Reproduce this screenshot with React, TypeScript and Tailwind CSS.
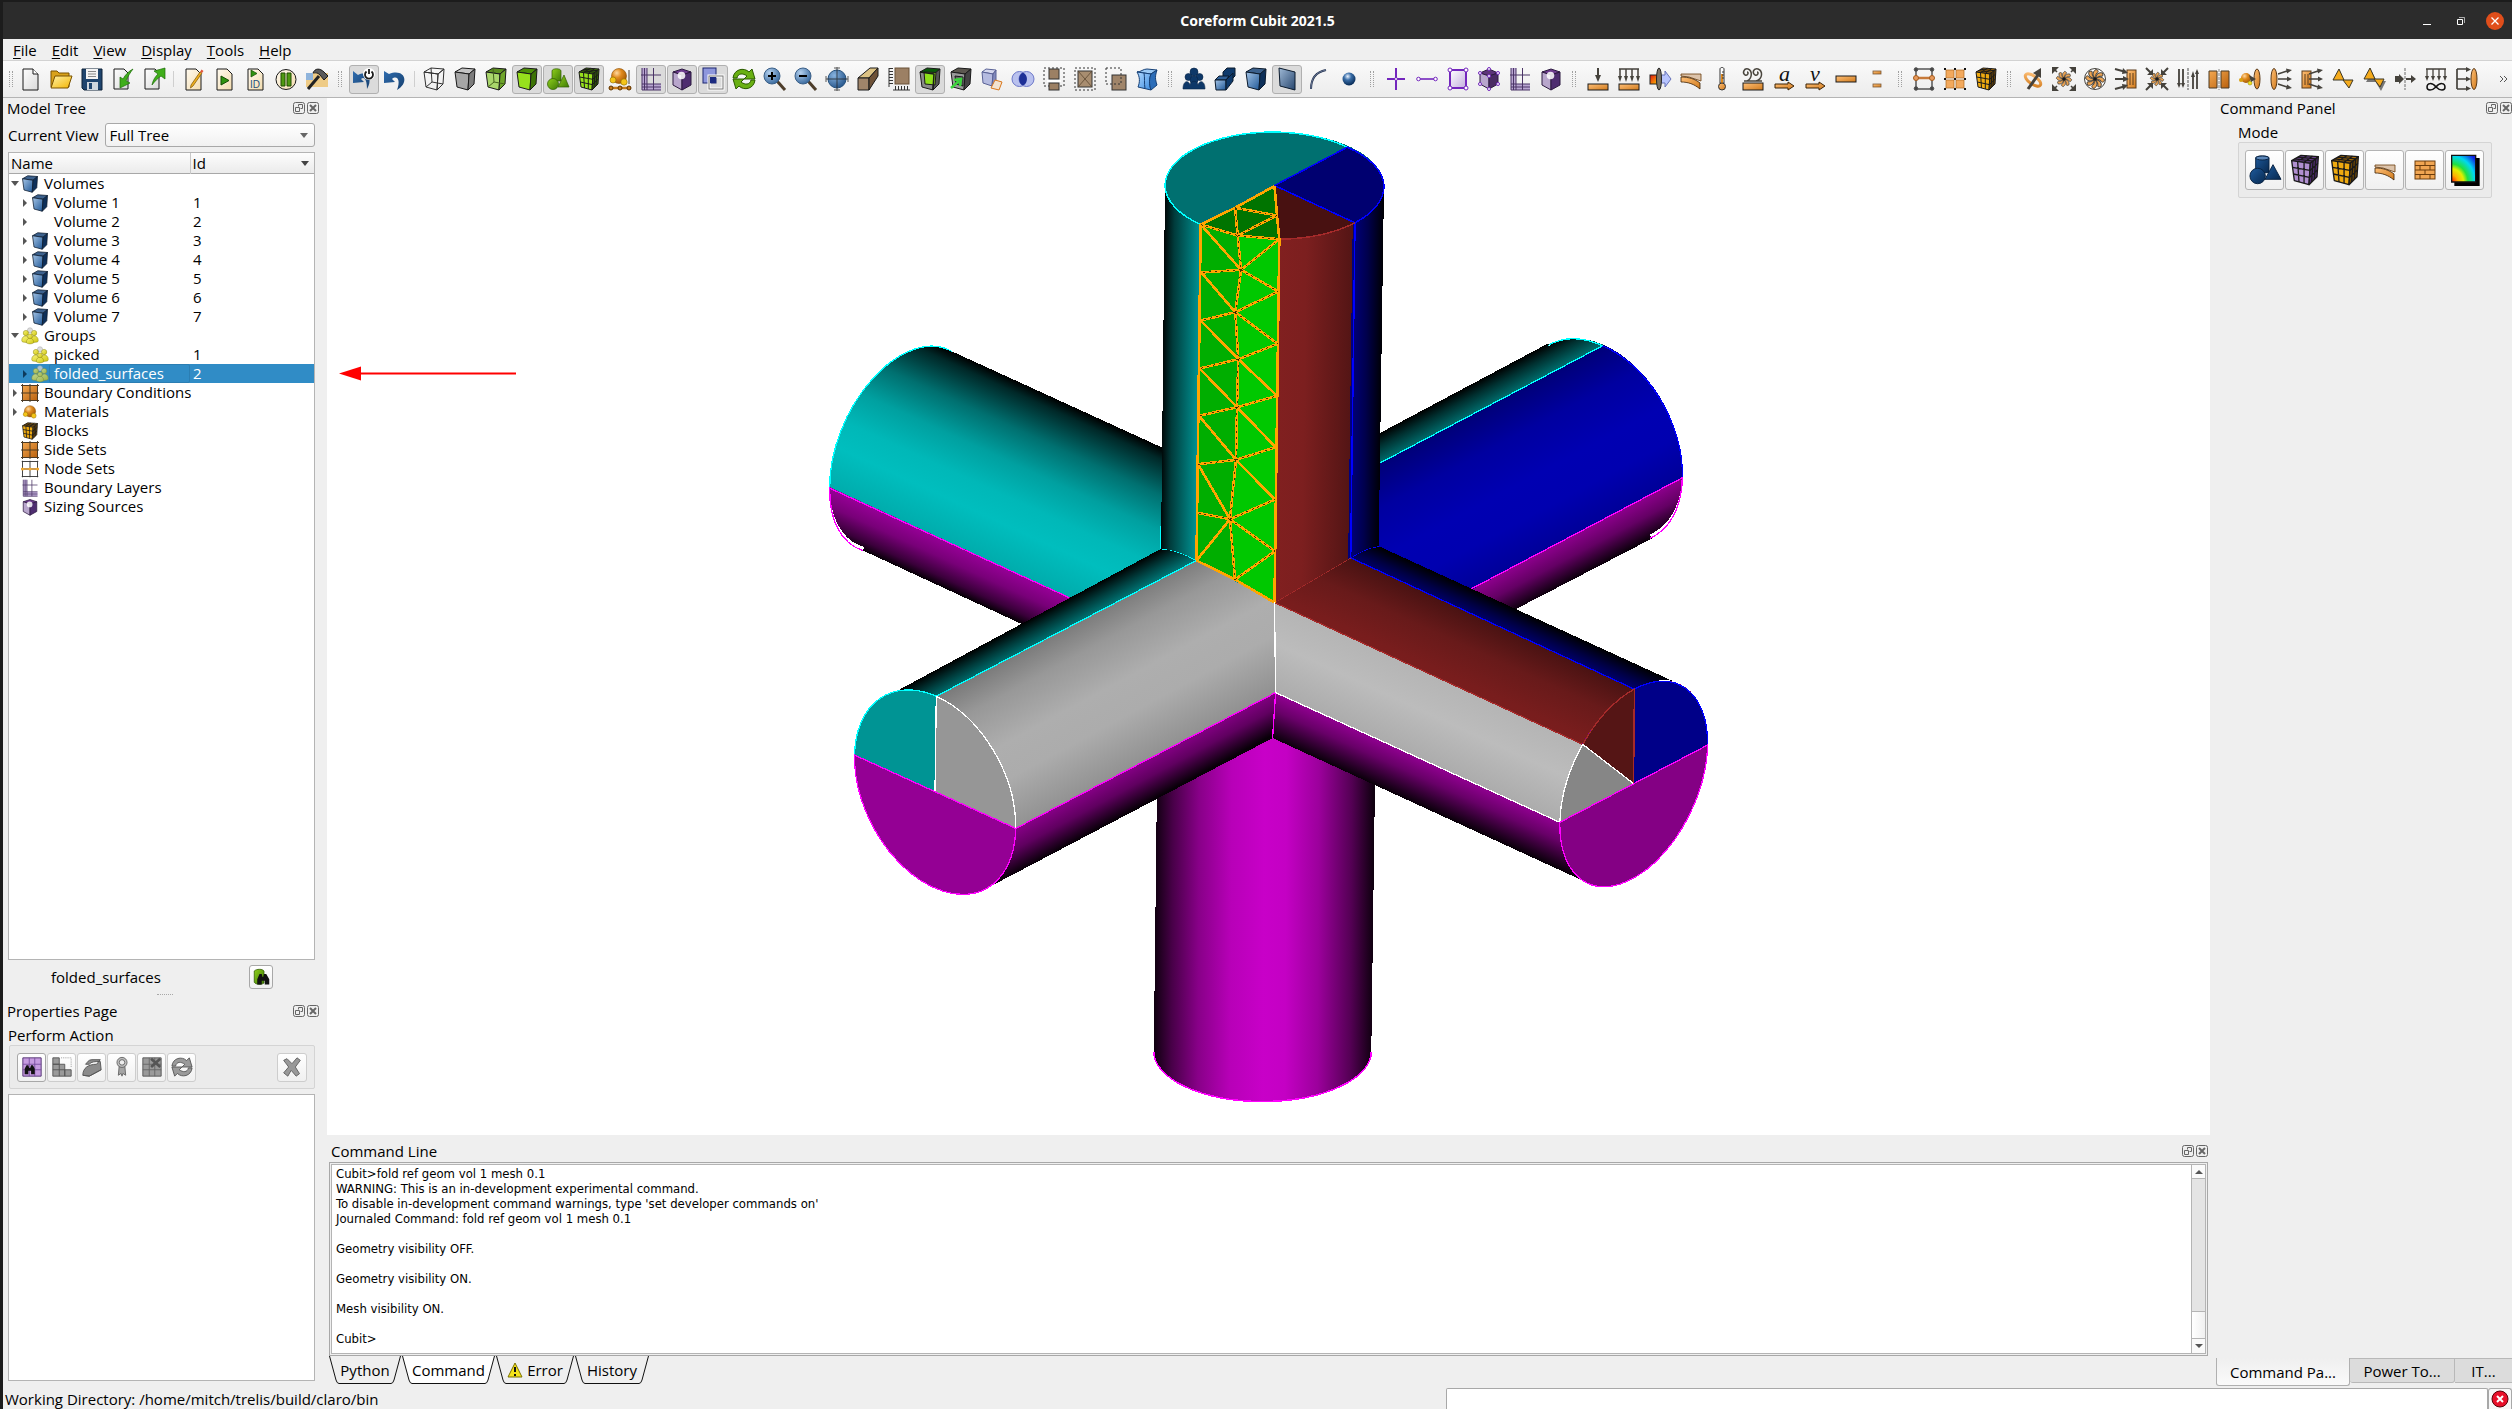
import React, { useState } from "react";
import clsx from "clsx";

type Point = [number, number];

const INK = "#1a1a1a";
const STEEL = "#45423c";

// ---------------------------------------------------------------- icons

function Cube({
  front,
  top,
  side,
  mesh,
  stroke = INK,
}: {
  front: string;
  top: string;
  side: string;
  mesh?: boolean;
  stroke?: string;
}) {
  return (
    <g stroke={stroke} strokeWidth="1" strokeLinejoin="round">
      <path d="M2 5L9 1L22 2L16 7Z" fill={top} />
      <path d="M2 5L16 7L15 23L4 20Z" fill={front} />
      <path d="M16 7L22 2L21 17L15 23Z" fill={side} />
      {mesh && (
        <path
          fill="none"
          d="M6.5 5.6L7.5 21M11.3 6.3L11.3 22M2.6 10L15.7 12.3M3.3 15L15.3 17.6M18 5.3L17 21M20 3.7L19 19M15.7 12.3L21.7 7M15.3 17.6L21.3 12M4.3 3.6L18 5.3M6.6 2.3L20 3.7M13.3 1.3L6.5 5.6M17.6 1.6L11.3 6.3"
        />
      )}
    </g>
  );
}

function Fan({ r }: { r: number }) {
  return (
    <g>
      {[0, 45, 90, 135, 180, 225, 270, 315].map((a) => (
        <path
          key={a}
          transform={`translate(12 12) rotate(${a}) scale(${r / 10})`}
          d="M0 -1C-3 -4 -2 -8 1 -9.5C4 -8.5 3.5 -7 2 -6C0.5 -5 1 -3 0 -1Z"
          fill="url(#orange)"
          stroke={STEEL}
          strokeWidth="1"
        />
      ))}
      <circle cx="12" cy="12" r="1.8" fill={INK} />
    </g>
  );
}

const BUMPS = (
  <>
    <circle cx="12" cy="5" r="4" />
    <circle cx="6.5" cy="10" r="3.5" />
    <circle cx="17.5" cy="10" r="3.5" />
    <circle cx="12" cy="13" r="4" />
    <path d="M1 22C1 13 7 13 8 18C9 13 15 13 16 18C17 13 23 13 23 22Z" />
  </>
);

const CURL_ARROWS = (
  <>
    <path d="M1 11C2 2 12 0 17 5L20 2L23 12L12 12L15 9C11 6 6 6 5 11Z" />
    <path d="M23 13C22 22 12 24 7 19L4 22L1 12L12 12L9 15C13 18 18 18 19 13Z" />
  </>
);

const GRID_AXES = (
  <g stroke="#4b3566" fill="none">
    <path d="M3 1V23H22V17H8V1Z" fill="#b9a6d2" stroke="none" />
    <path d="M3 1V23M5.5 1V23M8 1V23M14.5 1V23M3 23H22M3 20H22M3 17H22M2 8H22" />
  </g>
);

const SIZING = (
  <g stroke="#2d1a40" strokeLinejoin="round">
    <path d="M3 5L12 2L21 5L12 8Z" fill="#6b3a8c" />
    <path d="M3 5L12 8V23L3 18Z" fill="#b8a6cc" />
    <path d="M21 5L12 8V23L21 18Z" fill="#4e2d70" />
    <circle cx="11.5" cy="8.5" r="3.8" fill="#fff" stroke="none" opacity=".85" />
  </g>
);

const MATERIAL = (
  <>
    <circle cx="11" cy="9" r="7.5" fill="url(#ball)" stroke="#8a4b00" strokeWidth=".6" />
    <circle cx="5" cy="13" r="3" fill="#f5c518" stroke="#8a6a00" strokeWidth=".6" />
    <circle cx="16" cy="15" r="3.2" fill="#f5c518" stroke="#8a6a00" strokeWidth=".6" />
  </>
);

const GROUP = (
  <g stroke="#8f8a10" strokeWidth=".7" fill="url(#yellow)">
    <circle cx="12" cy="4.5" r="3.5" fill="#dcdcdc" stroke="#aaa" />
    <circle cx="6.5" cy="8" r="3.5" />
    <circle cx="17.5" cy="8" r="3.5" />
    <path d="M1 18C1 10 11 10 11 18L11 21L2 20ZM13 18C13 10 23 10 23 18L22 20L13 21Z" />
    <path d="M7 21C7 13 17 13 17 21C14 23 10 23 7 21Z" />
    <circle cx="12" cy="12.5" r="3.2" />
  </g>
);

const SIDESETS = (
  <g stroke="#4b3a24">
    <path d="M2 2H22V22H2Z" fill="url(#orangeDeep)" />
    <path d="M12 0V24M0 12H24M2 0V24M22 0V24M0 2H24M0 22H24" strokeWidth="1.3" />
  </g>
);

const TRIPLE_RIGHT = (
  <g stroke={STEEL} strokeWidth="1.5" fill={STEEL}>
    <path d="M9 7L18 4M9 12H18M9 17L18 20" />
    <path d="M17 1.5L23 3L18 6.5ZM18 9.5L23 12L18 14.5ZM18 17.5L23 21L17 22.5Z" stroke="none" />
  </g>
);

const PAGE = "M5 2H15L20 7V23H5Z";

const DIAG_OUT = (
  <g stroke={STEEL} strokeWidth="1.6" fill={STEEL}>
    <path d="M5 5L1 1M19 5L23 1M5 19L1 23M19 19L23 23" />
    <path d="M0 0H7L0 7ZM24 0H17L24 7ZM0 24H7L0 17ZM24 24H17L24 17Z" stroke="none" />
  </g>
);

const DIAG_IN = (
  <g stroke={STEEL} strokeWidth="2" fill={STEEL}>
    <path d="M1 1L6 6M23 1L18 6M1 23L6 18M23 23L18 18" />
    <path d="M8 8V2L2 8ZM16 8V2L22 8ZM8 16V22L2 16ZM16 16V22L22 16Z" stroke="none" />
  </g>
);

const ICONS: Record<string, React.ReactNode> = {
  new: (
    <g stroke={INK} fill="url(#paper)">
      <path d={PAGE} />
      <path d="M15 2V7H20" fill="#fff" />
    </g>
  ),
  open: (
    <g stroke="#7a5200" strokeLinejoin="round">
      <path d="M2 20V4H8L10 6H20V20Z" fill="#d9a21b" />
      <path d="M2 21L6 9H23L19 21Z" fill="url(#folder)" />
    </g>
  ),
  save: (
    <g>
      <path d="M2 2H22V23H4L2 21Z" fill="#20456e" stroke="#0f2338" />
      <rect x="6" y="2" width="12" height="10" fill="#f4f4f4" />
      <path d="M8 4.5H16M8 7H16M8 9.5H16" stroke="#888" />
      <rect x="7" y="15" width="11" height="8" fill="#cfd6dd" />
      <rect x="9" y="16" width="3" height="6" fill="#20456e" />
    </g>
  ),
  importFile: (
    <g>
      <path d="M3 2H13L17 6V22H3Z" fill="url(#paper)" stroke={INK} />
      <path d="M22 2C19 6 17 9 15 14L19 16L9 21L9 10L12 12C14 8 18 4 22 2Z" fill="#3fae1a" stroke="#1d6b08" strokeWidth=".7" />
    </g>
  ),
  exportFile: (
    <g>
      <path d="M3 2H13L17 6V22H3Z" fill="url(#paper)" stroke={INK} />
      <path d="M10 18C11 13 13 10 16 7L12 4L23 1L23 12L19 9C16 11 13 14 10 18Z" fill="#3fae1a" stroke="#1d6b08" strokeWidth=".7" />
    </g>
  ),
  journal: (
    <g>
      <path d={PAGE} fill="url(#cream)" stroke={INK} />
      <path d="M10 18L19 5L21 6L12 19L9.5 21Z" fill="#f0b020" stroke="#7a5200" strokeWidth=".7" />
      <path d="M19 5L20.5 2.5L22.5 4L21 6Z" fill="#e2583e" />
    </g>
  ),
  play: (
    <g>
      <path d={PAGE} fill="url(#cream)" stroke={INK} />
      <path d="M9 9L17 13.5L9 18Z" fill="#2f9410" stroke="#124a02" />
    </g>
  ),
  playId: (
    <g>
      <path d={PAGE} fill="url(#cream)" stroke={INK} />
      <path d="M8 3L14 6.5L8 10Z" fill="#2f9410" stroke="#124a02" strokeWidth=".7" />
      <text x="7" y="20.5" fontSize="10" fill="#24507c" fontFamily="Liberation Sans">
        ID
      </text>
    </g>
  ),
  pause: (
    <g>
      <circle cx="12" cy="12.5" r="10" fill="url(#cream)" stroke={INK} />
      <path d="M7 6H11V19H7ZM13 6H17V19H13Z" fill="#4f9a10" stroke="#1e4a02" />
    </g>
  ),
  hammer: (
    <g>
      <path d="M1 6H23V20H1Z" fill="#eecb86" />
      <path d="M1 6H8V13H1Z" fill="#8fb4dc" />
      <path d="M3 22L14 9" stroke="#222" strokeWidth="3" />
      <path d="M8 6C10 1 15 1 19 5L23 9L19 13L15 8C12 5 10 6 8 6Z" fill="#5a5a5a" stroke={INK} />
    </g>
  ),
  undoPower: (
    <g>
      <path d="M1 4L1 16L12 15L9 12C12 9 15 12 15 22C21 12 16 3 6 8Z" fill="url(#blueArrow)" />
      <circle cx="17" cy="7" r="6" fill="#fff" />
      <path d="M14.5 4.5A4 4 0 1 0 19.5 4.5M17 2V7" stroke={INK} strokeWidth="1.8" fill="none" />
    </g>
  ),
  undo: <path d="M1 4L1 16L12 15L9 12C14 8 18 13 14 23C27 16 22 1 6 7Z" fill="url(#blueArrow)" />,
  wire: (
    <g>
      <Cube front="none" top="none" side="none" stroke="#333" />
      <path d="M9 1L10 15L4 20M10 15L21 17" stroke="#333" fill="none" />
    </g>
  ),
  cubeGray: <Cube front="#a6a6a6" top="#c4c4c4" side="#7d7d7d" />,
  cubeGlass: (
    <g>
      <Cube front="#a9d66b" top="#5d8f22" side="#6fa52b" />
      <path d="M9 1L10 15L4 20M10 15L21 17" stroke="#44631c" fill="none" />
    </g>
  ),
  cubeGreen: <Cube front="#97e01c" top="#4d8f08" side="#3c7305" />,
  shapesGreen: (
    <g stroke="#2e5a00" strokeWidth=".7" fill="url(#green)">
      <path d="M6 4C6 1 15 1 15 4V14H6Z" />
      <path d="M12 20L18 8L23 20Z" />
      <circle cx="7" cy="17" r="5.5" />
    </g>
  ),
  meshGreen: <Cube front="#97e01c" top="#3c7305" side="#346204" mesh />,
  materialBar: (
    <g>
      {MATERIAL}
      <path d="M21 3V17" stroke={STEEL} />
      <path d="M1 21H23" stroke="#c77a1a" strokeWidth="2.5" />
      <circle cx="3" cy="21" r="2" fill="#c77a1a" stroke="#5a3200" />
      <circle cx="12" cy="21" r="2" fill="#c77a1a" stroke="#5a3200" />
      <circle cx="21" cy="21" r="2" fill="#c77a1a" stroke="#5a3200" />
    </g>
  ),
  gridAxes: GRID_AXES,
  sizing: SIZING,
  overlap: (
    <g>
      <rect x="2" y="1" width="13" height="15" fill="#8e97dc" stroke="#1d2670" />
      <rect x="8" y="9" width="14" height="13" fill="none" stroke="#fff" strokeWidth="3" />
      <rect x="8" y="9" width="14" height="13" fill="none" stroke="#777" />
      <rect x="9" y="10" width="6" height="6" fill="#1b2a80" />
    </g>
  ),
  refresh: <g fill="#69b012" stroke="#2b5a00">{CURL_ARROWS}</g>,
  zoomIn: (
    <g>
      <path d="M14 14L22 23" stroke="#4d3d2a" strokeWidth="3" />
      <circle cx="9" cy="9" r="8" fill="url(#lens)" stroke="#3a5f88" />
      <path d="M5 9H13M9 5V13" stroke="#000" strokeWidth="2" />
    </g>
  ),
  zoomOut: (
    <g>
      <path d="M14 14L22 23" stroke="#4d3d2a" strokeWidth="3" />
      <circle cx="9" cy="9" r="8" fill="url(#lens)" stroke="#3a5f88" />
      <path d="M5 9H13" stroke="#000" strokeWidth="2" />
    </g>
  ),
  zoomFit: (
    <g>
      <circle cx="12" cy="12" r="9" fill="url(#lensDeep)" stroke="#24507c" />
      <path d="M12 0V24M1 12H23M9 1H15M9 23H15M1 9V15M23 9V15" stroke="#222" opacity=".75" />
    </g>
  ),
  perspective: (
    <g stroke={INK} strokeLinejoin="round">
      <path d="M2 11L14 1L22 1L13 11Z" fill="#dcc284" />
      <path d="M2 11H13V23H2Z" fill="#a0856a" />
      <path d="M13 11L22 1V9L13 23Z" fill="#6e5238" />
    </g>
  ),
  ruler: (
    <g>
      <rect x="8" y="1" width="14" height="16" fill="#9c8064" stroke="#6a5238" />
      <path d="M4 1V18M8 21H23" stroke="#333" strokeWidth="4" strokeDasharray="1 2" />
      <path d="M2 1V20M6 23H23" stroke="#333" />
    </g>
  ),
  frameGreen: (
    <g stroke={INK} strokeLinejoin="round">
      <path d="M2 5L9 1L22 2L16 7Z" fill="#0b5a0b" />
      <path d="M2 5L16 7L15 23L4 20Z" fill="#8a8a8a" />
      <path d="M16 7L22 2L21 17L15 23Z" fill="#555" />
      <path d="M6 5L18 5.5L17 18L7 17Z" fill="#8ee01a" />
      <path d="M2 5L16 7L15 23" fill="none" strokeWidth="1.5" />
    </g>
  ),
  frameArrow: (
    <g>
      <Cube front="#999" top="#5c5850" side="#444" />
      <path d="M6 9L14 10V19L7 17Z" fill="#666" stroke={INK} />
      <path d="M2 21L10 14M5 13L12 12L11 19" stroke="#3bd43b" strokeWidth="2.5" fill="none" />
    </g>
  ),
  cubeTag: (
    <g strokeLinejoin="round">
      <path d="M2 5L6 2L16 3L13 7Z" fill="#d5d8ee" stroke="#5a6296" />
      <path d="M2 5L13 7L12 19L3 16Z" fill="#b5bbe0" stroke="#5a6296" />
      <path d="M13 7L16 3V13L12 19Z" fill="#8189bd" stroke="#5a6296" />
      <path d="M15 13L22 15L19 23L11 21Z" fill="#f3e3d0" stroke="#d9771c" />
    </g>
  ),
  intersect: (
    <g>
      <circle cx="8.5" cy="12" r="7.5" fill="#b9c1ee" stroke="#6c77c8" />
      <circle cx="15.5" cy="12" r="7.5" fill="#b9c1ee" stroke="#6c77c8" />
      <path d="M12 5.4A7.5 7.5 0 0 1 12 18.6A7.5 7.5 0 0 1 12 5.4Z" fill="#1d2f96" />
    </g>
  ),
  splitA: (
    <g>
      <path d="M2 1H22V19H2Z" fill="none" stroke="#333" strokeDasharray="2 2" />
      <rect x="7" y="2" width="10" height="10" fill="#9c8064" stroke="#333" />
      <rect x="7" y="16" width="10" height="7" fill="#9c8064" stroke="#333" />
      <path d="M5 14H19" stroke="#fff" strokeWidth="2" />
    </g>
  ),
  splitB: (
    <g>
      <path d="M2 1H22V23H2Z" fill="none" stroke="#333" strokeDasharray="2 2" />
      <rect x="5" y="4" width="14" height="16" fill="#a88d70" stroke="#333" />
      <path d="M5 4L19 20M19 4L5 20" stroke="#5a4630" strokeWidth=".8" />
    </g>
  ),
  splitC: (
    <g>
      <rect x="8" y="8" width="14" height="15" fill="#a0856a" stroke="#333" />
      <path d="M2 1H17V17H2Z" fill="none" stroke="#333" strokeDasharray="2 2" />
    </g>
  ),
  cubeWarp: (
    <g stroke="#153f75" strokeLinejoin="round">
      <path d="M2 5C6 5 8 2 12 2L22 3C20 5 18 5 16 7Z" fill="#9ccaf5" />
      <path d="M2 5L16 7C14 12 14 17 16 23L3 20C5 15 5 10 2 5Z" fill="url(#sky)" />
      <path d="M16 7L22 3C20 9 20 12 22 18L16 23C14 17 14 12 16 7Z" fill="#2c6db8" />
      <path d="M9 6C10 11 9 16 10 21.5" fill="none" />
    </g>
  ),
  groupNavy: (
    <g fill="#0e3868" stroke="#082548" strokeWidth=".6">
      {BUMPS}
    </g>
  ),
  bodyNavy: (
    <g stroke="#0b1a2c" strokeLinejoin="round">
      <path d="M10 5L14 1H22V9L18 13H10Z" fill="#0f3a6b" />
      <path d="M2 13L6 9H16L13 13Z" fill="#2f5f96" />
      <path d="M2 13H13V23H3Z" fill="url(#navy)" />
      <path d="M13 13L20 6V14L13 23Z" fill="#0f3a6b" />
    </g>
  ),
  volume: <Cube front="url(#navy)" top="#3c618d" side="#0d2f59" stroke="#0b1a2c" />,
  surface: <path d="M4 1L20 5V23L5 19Z" fill="url(#navyFace)" stroke="#0b1a2c" />,
  curve: (
    <g>
      <path d="M5 22C5 11 10 5 20 3" fill="none" stroke="#1d2c4a" strokeWidth="2" />
      <path d="M5 22C5 11 10 5 20 3" fill="none" stroke="#9aa7c4" strokeWidth=".6" />
    </g>
  ),
  vertex: <circle cx="12" cy="12" r="6.5" fill="url(#ballNavy)" />,
  meshNode: (
    <g stroke="#7326bd" strokeWidth="2" fill="#fff">
      <path d="M12 1V23M3 12H21" />
      <circle cx="12" cy="12" r="1.5" strokeWidth="1" />
    </g>
  ),
  meshEdge: (
    <g stroke="#7326bd" strokeWidth="1.6" fill="#fff">
      <path d="M4 12H20" />
      <circle cx="3.5" cy="12" r="1.8" strokeWidth="1" />
      <circle cx="20.5" cy="12" r="1.8" strokeWidth="1" />
    </g>
  ),
  meshFace: (
    <g stroke="#7326bd" fill="#fff">
      <rect x="4" y="3" width="16" height="18" fill="url(#lilac)" strokeWidth="2" />
      <circle cx="4" cy="3" r="2" />
      <circle cx="20" cy="3" r="2" />
      <circle cx="4" cy="21" r="2" />
      <circle cx="20" cy="21" r="2" />
    </g>
  ),
  meshHex: (
    <g>
      <path d="M3 6L12 2L21 6L12 9Z" fill="#5c3478" stroke="#2d1a40" />
      <path d="M3 6L12 9V22L3 17Z" fill="#b8a6cc" stroke="#2d1a40" />
      <path d="M21 6L12 9V22L21 17Z" fill="#4a2b63" stroke="#2d1a40" />
      <g fill="#fff" stroke="#7326bd">
        <circle cx="3" cy="6" r="1.5" />
        <circle cx="12" cy="2" r="1.5" />
        <circle cx="21" cy="6" r="1.5" />
        <circle cx="12" cy="9" r="1.5" />
        <circle cx="3" cy="17" r="1.5" />
        <circle cx="21" cy="17" r="1.5" />
        <circle cx="12" cy="22" r="1.5" />
      </g>
    </g>
  ),
  force: (
    <g>
      <rect x="2" y="17" width="20" height="6" fill="url(#orange)" stroke={INK} />
      <path d="M12 1V10" stroke={STEEL} strokeWidth="2" />
      <path d="M9 8H15L12 15Z" fill={STEEL} />
    </g>
  ),
  pressure: (
    <g>
      <rect x="2" y="17" width="20" height="6" fill="url(#orange)" stroke={INK} />
      <path d="M2 2H22M3 2V11M9 2V11M15 2V11M21 2V11" stroke={STEEL} strokeWidth="1.5" />
      <path d="M1 9H5L3 15ZM7 9H11L9 15ZM13 9H17L15 15ZM19 9H23L21 15Z" fill={STEEL} />
    </g>
  ),
  heatFlux: (
    <g stroke="#222">
      <rect x="2" y="8" width="9" height="9" fill="url(#hot)" />
      <path d="M12 8H17V4L23 12L17 20V16H12Z" fill="#b7c4ff" stroke="#6672b8" />
      <ellipse cx="11" cy="12" rx="2.5" ry="11" fill="#7a7468" />
    </g>
  ),
  bend: (
    <g stroke="#6b3c0c" strokeWidth=".8">
      <path d="M2 7H22V14L10 10L2 9Z" fill="#dcc3aa" />
      <path d="M2 10C10 10 16 12 21 16V22C15 17 9 15 2 15Z" fill="url(#orange)" stroke="#3b2206" />
    </g>
  ),
  temperature: (
    <g stroke="#333">
      <path d="M10 2C10 0 14 0 14 2V16H10Z" fill="#fff" />
      <path d="M11 7H13V17H11Z" fill="#e08a1e" stroke="none" />
      <circle cx="12" cy="19.5" r="3.5" fill="url(#orange)" />
      <path d="M12 5H14M12 8H14M12 11H14" />
    </g>
  ),
  convection: (
    <g>
      <rect x="2" y="16" width="20" height="7" fill="url(#orange)" stroke={INK} />
      <path
        d="M6 14C11 12 12 4 7 2C3 1 1 6 4 8C7 9 8 5 6 5M15 14C22 12 22 4 17 2C12 1 11 6 14 8C17 9 18 5 16 5M3 14H21"
        stroke="#4a463e"
        strokeWidth="1.5"
        fill="none"
      />
    </g>
  ),
  accel: (
    <g>
      <text x="7" y="14" fontSize="22" fontStyle="italic" fontFamily="Liberation Serif" fill="#111">
        a
      </text>
      <path d="M3 17H16V15L22 19L16 23V21H3Z" fill="url(#orange)" stroke="#3b2206" />
    </g>
  ),
  velocity: (
    <g>
      <text x="7" y="14" fontSize="22" fontStyle="italic" fontFamily="Liberation Serif" fill="#111">
        v
      </text>
      <path d="M3 17H16V15L22 19L16 23V21H3Z" fill="url(#orange)" stroke="#3b2206" />
    </g>
  ),
  bar: <rect x="2" y="9" width="20" height="6" fill="url(#orange)" stroke={INK} />,
  contact: (
    <g fill="url(#orange)" stroke="#7a5a3a" strokeWidth=".8">
      <rect x="8" y="4" width="8" height="3" />
      <rect x="8" y="17" width="8" height="3" />
    </g>
  ),
  nodeset: (
    <g stroke="#555" strokeWidth="1.5">
      <path d="M4 2H20M4 22H20M4 2V22M20 2V22" fill="none" />
      <path d="M4 11H20" stroke="#c77a3a" strokeWidth="2.5" />
      <g fill="#444" strokeWidth="1">
        <circle cx="4" cy="2.5" r="1.8" />
        <circle cx="20" cy="2.5" r="1.8" />
        <circle cx="4" cy="21.5" r="1.8" />
        <circle cx="20" cy="21.5" r="1.8" />
      </g>
      <circle cx="4" cy="11" r="2.5" fill="#e79a5c" stroke="#a45a1c" strokeWidth="1" />
      <circle cx="20" cy="11" r="2.5" fill="#e79a5c" stroke="#a45a1c" strokeWidth="1" />
    </g>
  ),
  sideset: (
    <g>
      <path d="M3 3H11V11H3ZM13 3H21V11H13ZM3 13H11V21H3ZM13 13H21V21H13Z" fill="#f3a95c" stroke="#b06a20" strokeWidth=".7" />
      <path d="M1 2H3M11 2H13M21 2H23M1 12H3M11 12H13M21 12H23M1 22H3M11 22H13M21 22H23" stroke="#111" strokeWidth="2" />
    </g>
  ),
  block: <Cube front="#efaa10" top="#a86c06" side="#6e4804" mesh />,
  swirlArrow: (
    <g>
      <ellipse cx="12" cy="13" rx="9" ry="4" transform="rotate(35 12 13)" fill="none" stroke="url(#orange)" strokeWidth="3" />
      <path d="M7 22L17 8" stroke={STEEL} strokeWidth="3" />
      <path d="M20 1L20 11L12 6Z" fill={STEEL} />
    </g>
  ),
  fanOut: (
    <g>
      {DIAG_OUT}
      <Fan r={8} />
    </g>
  ),
  fan: (
    <g>
      <circle cx="12" cy="12" r="10.5" fill="#fff" stroke={STEEL} />
      <Fan r={10} />
    </g>
  ),
  inflow: (
    <g>
      <rect x="13" y="3" width="9" height="18" fill="url(#orange)" stroke="#5a3a1a" />
      <path d="M16 6V18M19 6V18" stroke="#5a3a1a" />
      <path d="M1 2L12 5M1 12H12M1 22L12 19" stroke={STEEL} strokeWidth="2" />
      <path d="M9 1L14 6L8 7ZM9 9L15 12L9 15ZM8 17L14 18L9 23Z" fill={STEEL} />
    </g>
  ),
  fanIn: (
    <g>
      <Fan r={7} />
      {DIAG_IN}
    </g>
  ),
  shear: (
    <g stroke={STEEL} strokeWidth="1.8" fill={STEEL}>
      <path d="M3 2V18M7 2V18M17 7V22M21 4V22" />
      <path d="M1 16H5L3 21ZM5 16H9L7 21ZM15 10H19L17 4ZM19 7H23L21 2Z" stroke="none" />
      <path d="M12 1V23" stroke="#999" strokeDasharray="3 1" />
    </g>
  ),
  symmetry: (
    <g>
      <path d="M2 4H10V21H2ZM14 4H22V21H14Z" fill="url(#orangeDeep)" stroke="#4b3a24" />
      <path d="M12 2V23" stroke="#888" strokeDasharray="3 1" />
    </g>
  ),
  opening: (
    <g>
      <ellipse cx="19" cy="12" rx="3" ry="10" fill="url(#orange)" stroke="#5a3a1a" />
      <circle cx="8" cy="11" r="5" fill="url(#ball)" />
      <circle cx="12" cy="16" r="2" fill="#f0e020" stroke="#888000" strokeWidth=".5" />
      <circle cx="3" cy="13" r="2" fill="#d8a010" />
      <path d="M11 8L18 12L13 15Z" fill={STEEL} />
    </g>
  ),
  outlet: (
    <g>
      <ellipse cx="5" cy="12" rx="3" ry="10.5" fill="url(#orange)" stroke="#5a3a1a" />
      {TRIPLE_RIGHT}
    </g>
  ),
  outflow: (
    <g>
      <rect x="2" y="4" width="9" height="17" fill="url(#orange)" stroke="#5a3a1a" />
      <path d="M5 7V18M8 7V18" stroke="#5a3a1a" />
      {TRIPLE_RIGHT}
    </g>
  ),
  triA: <path d="M2 13L8 2L13 13ZM12 13H22L18 21Z" fill="#f5ab1c" stroke="#3b3626" />,
  triB: (
    <g>
      <path d="M4 15L10 5L15 15ZM13 14H24L19 24Z" fill="#777" />
      <path d="M2 12L8 1L13 12ZM12 12H22L18 20Z" fill="#f5ab1c" stroke="#3b3626" />
    </g>
  ),
  through: (
    <g fill={STEEL}>
      <path d="M2 9H6V7L11 12L6 17V15H2Z" />
      <path d="M12 1V23" stroke="#999" strokeWidth="1.5" strokeDasharray="3 1" />
      <path d="M13 11H18V8L23 12L18 16V13H13Z" />
    </g>
  ),
  farField: (
    <g>
      <path d="M2 2H22M3 2V11M9 2V11M15 2V11M21 2V11" stroke={STEEL} strokeWidth="1.3" />
      <path d="M1 9H5L3 14ZM7 9H11L9 14ZM13 9H17L15 14ZM19 9H23L21 14Z" fill={STEEL} />
      <path d="M12 20C8 15 3 16 3 20C3 24 8 24 12 20C16 15 21 16 21 20C21 24 16 24 12 20Z" fill="none" stroke="#111" strokeWidth="1.5" />
    </g>
  ),
  inlet: (
    <g>
      <ellipse cx="19" cy="12" rx="3" ry="10.5" fill="url(#orange)" stroke="#5a3a1a" />
      <path d="M2 2V22M2 2H12M2 12H12M2 22H12" stroke={STEEL} strokeWidth="1.7" fill="none" />
      <path d="M11 0L16 2.5L11 5ZM11 9.5L16 12L11 14.5ZM11 19L16 21.5L11 24Z" fill={STEEL} />
    </g>
  ),
  group: GROUP,
  sidesetTree: SIDESETS,
  material: <g transform="translate(1 2)">{MATERIAL}</g>,
  nodesetTree: (
    <g stroke="#333" strokeWidth="1.2">
      <path d="M2 1V23M12 1V23M22 1V23M1 2H23M1 22H23" />
      <path d="M0 12H24" stroke="#c07a10" strokeWidth="2" />
      <circle cx="2" cy="12" r="2" fill="#f0a830" stroke="none" />
      <circle cx="12" cy="12" r="2" fill="#f0a830" stroke="none" />
      <circle cx="22" cy="12" r="2" fill="#f0a830" stroke="none" />
    </g>
  ),
  shapesNavy: (
    <g stroke="#06203f" strokeWidth=".7" fill="url(#navyBall)">
      <path d="M5 3C5 1 15 1 15 3V14H5Z" />
      <ellipse cx="10" cy="3" rx="5" ry="1.5" fill="#5b86b8" />
      <path d="M12 19L18 8L24 19Z" />
      <circle cx="6.5" cy="16.5" r="5.8" />
    </g>
  ),
  meshPurple: <Cube front="#b08fd0" top="#6a3f8c" side="#4f2d70" mesh />,
  bricks: (
    <g stroke="#6b3c0c">
      <rect x="2" y="3" width="20" height="18" fill="#f0a552" />
      <path d="M2 7.5H22M2 12H22M2 16.5H22M12 3V7.5M7 7.5V12M17 7.5V12M12 12V16.5M7 16.5V21M17 16.5V21" fill="none" />
    </g>
  ),
  results: (
    <g>
      <path d="M4 3H23V24H4Z" fill="#000" />
      <path d="M2 1H20V21H2Z" fill="url(#rainbow)" stroke="#111" />
    </g>
  ),
  findMesh: (
    <g>
      <path d="M2 2H22V22H2Z" fill="#c69be0" stroke="#4f2d70" />
      <path d="M2 9H22M2 15H22M9 2V22M15 2V22" stroke="#7a4fa0" />
      <path d="M4 20V14L6 10H8L9 13H10L11 10H13L15 14V20H11V16H8V20Z" fill="#111" />
    </g>
  ),
  refineMesh: (
    <g>
      <path d="M2 2H9V9H2ZM2 9H15V22H2ZM15 15H22V22H15Z" fill="#9a9a9a" stroke="#555" />
      <path d="M9 9V22M2 15H15" stroke="#555" />
      <path d="M11 2H22V13" stroke="#999" strokeDasharray="1 1" fill="none" />
    </g>
  ),
  iron: (
    <g stroke="#555">
      <path d="M2 21C2 13 8 9 17 9L21 4H12C8 4 7 7 5 9L9 9C11 6 16 6 21 6L22 15L9 22Z" fill="#8b8b8b" />
      <path d="M2 21L9 22L22 15" fill="none" />
    </g>
  ),
  ribbon: (
    <g stroke="#666">
      <path d="M9 10L8 21L11 19L12 22L13 19L16 21L15 10Z" fill="#a5a5a5" />
      <circle cx="12" cy="7" r="5.5" fill="#bdbdbd" />
      <circle cx="12" cy="7" r="3" fill="#eee" />
    </g>
  ),
  deleteMesh: (
    <g>
      <path d="M2 2H22V22H2Z" fill="#9a9a9a" stroke="#555" />
      <path d="M2 9H22M2 15H22M9 2V22M15 2V22" stroke="#666" />
      <path d="M11 3L21 12M21 3L11 12" stroke="#555" strokeWidth="3" />
    </g>
  ),
  refreshGray: <g fill="#9a9a9a" stroke="#555">{CURL_ARROWS}</g>,
  cross: (
    <path d="M2 4L6 2L12 8L18 1L22 4L16 12L21 20L17 23L11 16L7 23L2 19L8 12Z" fill="#999" stroke="#555" />
  ),
  findGreen: (
    <g>
      <path d="M3 4C6 1 14 1 16 4V20C12 23 5 22 3 19Z" fill="url(#green)" stroke="#2e5a00" />
      <path d="M7 22V15L10 8H13L14 12H15L16 8H19L23 15V22H17V17H13V22Z" fill="#111" />
    </g>
  ),
};

function Icon({ name, className = "size-6" }: { name: string; className?: string }) {
  return (
    <svg viewBox="0 0 24 24" className={clsx("shrink-0 overflow-visible", className)} aria-hidden="true">
      {ICONS[name]}
    </svg>
  );
}

function SharedGradients() {
  const linear: [string, string, string][] = [
    ["paper", "#ffffff", "#d9d9d9"],
    ["cream", "#fffaf0", "#f3dcae"],
    ["folder", "#fff2a8", "#f3b400"],
    ["blueArrow", "#2f6cae", "#16406f"],
    ["green", "#8fd01c", "#3f7a05"],
    ["orange", "#ffc078", "#d07a1c"],
    ["orangeDeep", "#f4a850", "#b9610e"],
    ["navy", "#a4c4e6", "#1f5796"],
    ["navyFace", "#9fb9d6", "#27466e"],
    ["navyBall", "#1e5a9c", "#08294f"],
    ["sky", "#b0d8ff", "#3d8de0"],
    ["lilac", "#ffffff", "#c3aede"],
    ["hot", "#e01010", "#ffd000"],
    ["yellow", "#f7f37a", "#cfc60c"],
  ];
  return (
    <svg className="absolute size-0" aria-hidden="true">
      <defs>
        {linear.map(([id, from, to]) => (
          <linearGradient key={id} id={id} x1="0" y1="0" x2="1" y2="1">
            <stop offset="0" stopColor={from} />
            <stop offset="1" stopColor={to} />
          </linearGradient>
        ))}
        <radialGradient id="lens" cx=".35" cy=".3" r=".8">
          <stop offset="0" stopColor="#b4d0ee" />
          <stop offset="1" stopColor="#2c5f96" />
        </radialGradient>
        <radialGradient id="lensDeep" cx=".35" cy=".3" r=".8">
          <stop offset="0" stopColor="#86b2de" />
          <stop offset="1" stopColor="#1f4f86" />
        </radialGradient>
        <radialGradient id="ball" cx=".35" cy=".3" r=".8">
          <stop offset="0" stopColor="#ffd9a0" />
          <stop offset=".4" stopColor="#e08a1e" />
          <stop offset="1" stopColor="#9a5200" />
        </radialGradient>
        <radialGradient id="ballNavy" cx=".4" cy=".3" r=".7">
          <stop offset="0" stopColor="#e8f2ff" />
          <stop offset=".4" stopColor="#3a6ea8" />
          <stop offset="1" stopColor="#062a55" />
        </radialGradient>
        <radialGradient id="rainbow" cx="0" cy="1" r="1.3">
          <stop offset="0" stopColor="#ff1000" />
          <stop offset=".2" stopColor="#ffb000" />
          <stop offset=".38" stopColor="#e0f000" />
          <stop offset=".52" stopColor="#20e040" />
          <stop offset=".75" stopColor="#00d8f0" />
          <stop offset="1" stopColor="#1020e0" />
        </radialGradient>
      </defs>
    </svg>
  );
}

// ---------------------------------------------------------------- toolbar

// "|" is a separator, a trailing "*" marks a toggled tool
const TOOL_GROUPS: string[][] = [
  ["new", "open", "save", "importFile", "exportFile", "|", "journal", "play", "playId", "pause", "hammer"],
  [
    "undoPower*", "undo", "|", "wire", "cubeGray", "cubeGlass", "cubeGreen*", "shapesGreen*", "meshGreen*",
    "materialBar", "gridAxes*", "sizing*", "overlap*", "refresh", "zoomIn", "zoomOut", "zoomFit",
    "perspective", "ruler", "frameGreen*", "frameArrow", "cubeTag", "intersect", "splitA", "splitB",
    "splitC", "cubeWarp",
  ],
  ["groupNavy", "bodyNavy", "volume", "surface*", "curve", "vertex"],
  ["meshNode", "meshEdge", "meshFace", "meshHex", "gridAxes", "sizing"],
  ["force", "pressure", "heatFlux", "bend", "temperature", "convection", "accel", "velocity", "bar", "contact"],
  ["nodeset", "sideset", "block"],
  [
    "swirlArrow", "fanOut", "fan", "inflow", "fanIn", "shear", "symmetry", "opening", "outlet", "outflow",
    "triA", "triB", "through", "farField", "inlet",
  ],
];

function Toolbar() {
  return (
    <div
      role="toolbar"
      aria-label="Main"
      className="flex h-[37px] shrink-0 items-center border-b border-[#b4b4b4] bg-gradient-to-b from-[#fafafa] to-[#ececec] pl-1"
    >
      {TOOL_GROUPS.map((tools, g) => (
        <div key={g} className="flex items-center gap-px">
          <span className={clsx("flex h-4 justify-center gap-0.5", g === 0 ? "w-[7px]" : "w-4")}>
            <i className="w-0 border-l border-dotted border-[#a0a0a0]" />
            <i className="w-0 border-l border-dotted border-[#a0a0a0]" />
          </span>
          {tools.map((tool, i) => {
            if (tool === "|") {
              return <span key={i} className="mx-[3px] h-4 w-px bg-[#cfcfcf]" />;
            }
            const active = tool.endsWith("*");
            const name = tool.replace("*", "");
            return (
              <button
                key={i}
                type="button"
                aria-label={name}
                aria-pressed={active}
                className={clsx(
                  "flex h-[29px] w-[30px] items-center justify-center rounded-[3px] border",
                  active ? "border-[#b0b0b0] bg-[#dbdbdb]" : "border-transparent",
                )}
              >
                <Icon name={name} />
              </button>
            );
          })}
        </div>
      ))}
      <button type="button" aria-label="More tools" className="mr-1 ml-auto text-[#555]">
        <svg viewBox="0 0 9 8" className="h-2 w-[9px]" fill="none" stroke="currentColor">
          <path d="M1 1L4 4L1 7M5 1L8 4L5 7" />
        </svg>
      </button>
    </div>
  );
}

// ---------------------------------------------------------------- docks

function DockTitle({ title, className }: { title: string; className?: string }) {
  return (
    <div className={clsx("flex items-center gap-0.5", className)}>
      <h2 className="mr-auto">{title}</h2>
      <button type="button" aria-label={`Float ${title}`}>
        <svg viewBox="0 0 12 12" className="size-3" fill="none" stroke="#666">
          <rect x=".5" y=".5" width="11" height="11" rx="2" />
          <path d="M5.5 4.5V2.5H9.5V6.5H7.5M2.5 5.5H6.5V9.5H2.5Z" />
        </svg>
      </button>
      <button type="button" aria-label={`Close ${title}`}>
        <svg viewBox="0 0 12 12" className="size-3" fill="none" stroke="#666">
          <rect x=".5" y=".5" width="11" height="11" rx="2" />
          <path d="M3 3L9 9M9 3L3 9" strokeWidth="2" />
        </svg>
      </button>
    </div>
  );
}

type TreeRow = {
  label: string;
  id?: string;
  icon?: string;
  depth: 0 | 1;
  arrow?: "open" | "closed";
};

const TREE: TreeRow[] = [
  { label: "Volumes", icon: "volume", depth: 0, arrow: "open" },
  { label: "Volume 1", id: "1", icon: "volume", depth: 1, arrow: "closed" },
  { label: "Volume 2", id: "2", depth: 1, arrow: "closed" },
  { label: "Volume 3", id: "3", icon: "volume", depth: 1, arrow: "closed" },
  { label: "Volume 4", id: "4", icon: "volume", depth: 1, arrow: "closed" },
  { label: "Volume 5", id: "5", icon: "volume", depth: 1, arrow: "closed" },
  { label: "Volume 6", id: "6", icon: "volume", depth: 1, arrow: "closed" },
  { label: "Volume 7", id: "7", icon: "volume", depth: 1, arrow: "closed" },
  { label: "Groups", icon: "group", depth: 0, arrow: "open" },
  { label: "picked", id: "1", icon: "group", depth: 1 },
  { label: "folded_surfaces", id: "2", icon: "group", depth: 1, arrow: "closed" },
  { label: "Boundary Conditions", icon: "sidesetTree", depth: 0, arrow: "closed" },
  { label: "Materials", icon: "material", depth: 0, arrow: "closed" },
  { label: "Blocks", icon: "block", depth: 0 },
  { label: "Side Sets", icon: "sidesetTree", depth: 0 },
  { label: "Node Sets", icon: "nodesetTree", depth: 0 },
  { label: "Boundary Layers", icon: "gridAxes", depth: 0 },
  { label: "Sizing Sources", icon: "sizing", depth: 0 },
];

function ModelTree() {
  const [selected, setSelected] = useState("folded_surfaces");

  return (
    <section className="flex min-h-0 flex-1 flex-col">
      <DockTitle title="Model Tree" className="h-5 pr-2 pl-1" />
      <div className="mt-[5px] mb-[5px] flex h-6 items-center gap-1.5 pr-3 pl-[5px]">
        <label htmlFor="current-view" className="whitespace-nowrap">
          Current View
        </label>
        <div className="relative flex-1">
          <select
            id="current-view"
            className="h-6 w-full appearance-none rounded-[3px] border border-[#a8a8a8] bg-gradient-to-b from-white to-[#f1f1f1] pl-1"
          >
            <option>Full Tree</option>
          </select>
          <svg viewBox="0 0 8 5" className="absolute top-2.5 right-[7px] h-[5px] w-2" fill="#666">
            <path d="M0 0H8L4 5Z" />
          </svg>
        </div>
      </div>
      <div className="mr-3 ml-[5px] min-h-0 flex-1 border border-[#b4b4b4] bg-white">
        <table className="w-full table-fixed border-collapse text-left">
          <thead>
            <tr className="h-5 border-b border-[#a8a8a8] bg-gradient-to-b from-[#fdfdfd] to-[#ebebeb] leading-5">
              <th className="w-[181px] border-r border-[#c8c8c8] p-0 pl-0.5 font-normal">Name</th>
              <th className="p-0 pl-0.5 font-normal">
                <span className="flex items-center justify-between pr-[5px]">
                  Id
                  <svg viewBox="0 0 8 5" className="h-[5px] w-2" fill="#444">
                    <path d="M0 0H8L4 5Z" />
                  </svg>
                </span>
              </th>
            </tr>
          </thead>
          <tbody>
            {TREE.map((row) => {
              const isSelected = row.label === selected;
              return (
                <tr
                  key={row.label}
                  onClick={() => setSelected(row.label)}
                  className={clsx("h-[19px] leading-[19px]", isSelected && "bg-[#308cc6] text-white")}
                >
                  <td className={clsx("p-0", row.depth === 1 && "pl-2.5")}>
                    <span className="flex items-center">
                      <span className="flex w-3 shrink-0 justify-center">
                        {row.arrow === "open" && (
                          <svg viewBox="0 0 8 5" className="h-[5px] w-2" fill="#555">
                            <path d="M0 0H8L4 5Z" />
                          </svg>
                        )}
                        {row.arrow === "closed" && (
                          <svg viewBox="0 0 4 8" className="h-2 w-1" fill={isSelected ? "#0d3a5c" : "#555"}>
                            <path d="M0 0L4 4L0 8Z" />
                          </svg>
                        )}
                      </span>
                      {row.icon ? (
                        <Icon name={row.icon} className={clsx("size-[18px]", isSelected && "opacity-70")} />
                      ) : (
                        <span className="size-[18px] shrink-0" />
                      )}
                      <span
                        className={clsx(
                          "flex-1 pl-[5px] whitespace-nowrap",
                          isSelected && "rounded-xs outline -outline-offset-1 outline-[#2b7eb3]",
                        )}
                      >
                        {row.label}
                      </span>
                    </span>
                  </td>
                  <td className="p-0 pl-[3px]">{row.id}</td>
                </tr>
              );
            })}
          </tbody>
        </table>
      </div>
      <div className="flex h-[34px] items-center pr-[54px] pl-12">
        <span className="mr-auto">{selected}</span>
        <button
          type="button"
          aria-label="Find"
          className="flex size-6 items-center justify-center rounded-[3px] border border-[#a8a8a8] bg-gradient-to-b from-white to-[#f0f0f0]"
        >
          <Icon name="findGreen" className="size-[18px]" />
        </button>
      </div>
      <i className="mx-auto h-0 w-4 border-t border-dotted border-[#a8a8a8]" />
    </section>
  );
}

const ACTIONS = ["findMesh", "refineMesh", "iron", "ribbon", "deleteMesh", "refreshGray"];

function PropertiesPage() {
  return (
    <section className="pt-1.5 pb-[7px]">
      <DockTitle title="Properties Page" className="h-5 pr-2 pl-1" />
      <h3 className="mt-1 pl-[5px] leading-5">Perform Action</h3>
      <div className="mr-3 ml-1.5 flex h-11 items-center gap-px rounded-xs border border-[#d4d4d4] bg-[#ebebeb] px-[7px]">
        {ACTIONS.map((name, i) => (
          <button
            key={name}
            type="button"
            aria-label={name}
            className={clsx(
              "flex h-[29px] w-[29px] items-center justify-center rounded-[3px] border bg-gradient-to-b from-white to-[#f0f0f0]",
              i === 0 ? "border-[#a8a8a8]" : "border-[#cdcdcd]",
            )}
          >
            <Icon name={name} className="size-[22px]" />
          </button>
        ))}
        <button
          type="button"
          aria-label="Delete"
          className="ml-auto flex h-[29px] w-[30px] items-center justify-center rounded-[3px] border border-[#cdcdcd] bg-gradient-to-b from-white to-[#f0f0f0]"
        >
          <Icon name="cross" className="size-5" />
        </button>
      </div>
      <div className="mt-[5px] mr-3 ml-[5px] h-[287px] border border-[#b4b4b4] bg-white" />
    </section>
  );
}

const MODES = ["shapesNavy", "meshPurple", "block", "bend", "bricks", "results"];

function CommandPanel() {
  return (
    <aside className="flex w-[302px] shrink-0 flex-col">
      <DockTitle title="Command Panel" className="h-5 pl-2.5" />
      <h3 className="mt-1 pl-7 leading-5">Mode</h3>
      <div className="mr-5 ml-7 flex h-14 items-center gap-px rounded-xs border border-[#d4d4d4] bg-[#ebebeb] px-1.5">
        {MODES.map((name) => (
          <button
            key={name}
            type="button"
            aria-label={name}
            className="flex h-10 w-[39px] items-center justify-center rounded-[3px] border border-[#b4b4b4] bg-gradient-to-b from-white to-[#f0f0f0]"
          >
            <Icon name={name} className={name === "bend" || name === "bricks" ? "size-6" : "size-8"} />
          </button>
        ))}
      </div>
      <div role="tablist" className="mt-auto mb-0.5 flex h-7 items-start pl-1.5">
        <button
          type="button"
          role="tab"
          aria-selected="true"
          className="h-7 w-[134px] rounded-b-[3px] border border-t-0 border-[#b0b0b0] bg-gradient-to-b from-[#efefef] to-[#fafafa]"
        >
          Command Pa...
        </button>
        <button
          type="button"
          role="tab"
          aria-selected="false"
          className="h-[25px] w-[105px] rounded-b-[3px] border border-l-0 border-[#b8b8b8] bg-[#dcdcdc]"
        >
          Power To...
        </button>
        <button
          type="button"
          role="tab"
          aria-selected="false"
          className="h-[25px] flex-1 border-y border-[#b8b8b8] bg-[#dcdcdc]"
        >
          IT...
        </button>
      </div>
    </aside>
  );
}

// ---------------------------------------------------------------- console

const CONSOLE_LINES = [
  "Cubit>fold ref geom vol 1 mesh 0.1",
  "WARNING: This is an in-development experimental command.",
  "To disable in-development command warnings, type 'set developer commands on'",
  "Journaled Command: fold ref geom vol 1 mesh 0.1",
  "",
  "Geometry visibility OFF.",
  "",
  "Geometry visibility ON.",
  "",
  "Mesh visibility ON.",
  "",
  "Cubit>",
];

const CONSOLE_TABS = [
  { label: "Python", width: 72, className: "w-[72px]" },
  { label: "Command", width: 93, className: "w-[93px]" },
  { label: "Error", width: 78, className: "w-[78px]" },
  { label: "History", width: 74, className: "w-[74px]" },
];

function CommandLine() {
  const [tab, setTab] = useState("Command");

  return (
    <section className="flex shrink-0 flex-col pr-0.5 pl-0.5">
      <DockTitle title="Command Line" className="h-[27px] pt-[5px] pl-0.5" />
      <div className="flex h-[194px] border border-[#a8a8a8] bg-[#efefef] p-px">
        <div className="flex flex-1 border border-[#b4b4b4] bg-white">
          <div
            role="log"
            className="flex-1 pt-px pl-1 font-['DejaVu_Sans_Condensed','DejaVu_Sans',sans-serif] text-[13px] leading-[15px] [font-stretch:condensed]"
          >
            {CONSOLE_LINES.map((line, i) => (
              <p key={i} className="h-[15px] whitespace-pre">
                {line}
              </p>
            ))}
          </div>
          <div className="flex w-[14px] flex-col border-l border-[#b4b4b4] bg-[#e4e4e4]">
            <button type="button" aria-label="Scroll up" className="flex h-3.5 items-center justify-center border-b border-[#b4b4b4] bg-[#fafafa]">
              <svg viewBox="0 0 8 4" className="h-1 w-2" fill="#555">
                <path d="M0 4H8L4 0Z" />
              </svg>
            </button>
            <span className="mt-auto h-7 border-y border-[#b4b4b4] bg-gradient-to-r from-white to-[#f0f0f0]" />
            <button type="button" aria-label="Scroll down" className="flex h-3.5 items-center justify-center bg-[#fafafa]">
              <svg viewBox="0 0 8 4" className="h-1 w-2" fill="#555">
                <path d="M0 0H8L4 4Z" />
              </svg>
            </button>
          </div>
        </div>
      </div>
      <div role="tablist" className="flex h-8 items-start gap-px">
        {CONSOLE_TABS.map(({ label, width, className }) => (
          <button
            key={label}
            type="button"
            role="tab"
            aria-selected={label === tab}
            onClick={() => setTab(label)}
            className={clsx("relative flex h-7 items-center justify-center gap-1", className)}
          >
            <svg viewBox={`0 0 ${width} 28`} className="absolute inset-0 size-full">
              <path
                d={`M0.5 0L7 24Q8 27.5 10 27.5H${width - 10}Q${width - 8} 27.5 ${width - 7} 24L${width - 0.5} 0`}
                fill={label === tab ? "#fff" : "#efefef"}
                stroke="#111"
              />
            </svg>
            {label === "Error" && (
              <svg viewBox="0 0 16 16" className="relative size-4">
                <path d="M8 1L15 15H1Z" fill="#f3e21c" stroke="#7a7000" strokeLinejoin="round" />
                <path d="M8 5V10M8 12V14" stroke="#111" strokeWidth="2" />
              </svg>
            )}
            <span className="relative">{label}</span>
          </button>
        ))}
      </div>
    </section>
  );
}

// ---------------------------------------------------------------- viewport

type Shade = { id: string; from: Point; to: Point; stops: [number, string][] };

// Each gradient runs across one arm, from silhouette to silhouette.
const SHADES: Shade[] = [
  {
    id: "armBackLeft",
    from: [950, 350],
    to: [859, 548],
    stops: [
      [0, "#000"], [0.05, "#002828"], [0.2, "#007070"], [0.35, "#00a0a0"], [0.5, "#00b8b8"], [0.62, "#00bebe"],
      [0.8, "#00acac"], [0.8, "#980098"], [0.88, "#780078"], [0.96, "#3a003a"], [1, "#080008"],
    ],
  },
  {
    id: "armBackRight",
    from: [1548, 343],
    to: [1652, 538],
    stops: [
      [0, "#000"], [0.05, "#003030"], [0.122, "#006c6c"], [0.122, "#000078"], [0.3, "#0000a0"], [0.5, "#0000b2"],
      [0.65, "#0000b0"], [0.82, "#000098"], [0.82, "#8c008c"], [0.9, "#640064"], [1, "#080008"],
    ],
  },
  {
    id: "armTop",
    from: [1164, 185],
    to: [1384, 188],
    stops: [
      [0, "#000"], [0.05, "#003c3c"], [0.17, "#009494"], [0.5, "#009c9c"], [0.5, "#822020"], [0.65, "#7c1f1f"],
      [0.86, "#541515"], [0.86, "#000080"], [0.93, "#00004c"], [1, "#000004"],
    ],
  },
  {
    id: "armBottom",
    from: [1155, 900],
    to: [1373, 901],
    stops: [
      [0, "#100010"], [0.08, "#480048"], [0.2, "#880088"], [0.35, "#b800b8"], [0.5, "#c800c8"], [0.6, "#c400c4"],
      [0.75, "#9c009c"], [0.9, "#540054"], [1, "#100010"],
    ],
  },
  {
    id: "frontLeftTeal",
    from: [894, 692],
    to: [997, 883],
    stops: [[0, "#000"], [0.06, "#003c3c"], [0.12, "#007474"]],
  },
  {
    id: "frontLeftGray",
    from: [894, 692],
    to: [997, 883],
    stops: [[0.1, "#787878"], [0.25, "#989898"], [0.45, "#aeaeae"], [0.6, "#acacac"], [0.82, "#929292"]],
  },
  {
    id: "frontLeftMagenta",
    from: [894, 692],
    to: [997, 883],
    stops: [[0.8, "#900090"], [0.9, "#600060"], [1, "#080008"]],
  },
  {
    id: "frontRightBlue",
    from: [1672, 680],
    to: [1581, 879],
    stops: [[0, "#000"], [0.06, "#000040"], [0.12, "#000078"]],
  },
  {
    id: "frontRightRed",
    from: [1672, 680],
    to: [1581, 879],
    stops: [[0.1, "#481212"], [0.25, "#681a1a"], [0.4, "#781d1d"], [0.5, "#7c1e1e"]],
  },
  {
    id: "frontRightGray",
    from: [1672, 680],
    to: [1581, 879],
    stops: [[0.42, "#b4b4b4"], [0.6, "#bcbcbc"], [0.8, "#acacac"]],
  },
  {
    id: "frontRightMagenta",
    from: [1672, 680],
    to: [1581, 879],
    stops: [[0.79, "#980098"], [0.88, "#680068"], [1, "#080008"]],
  },
];

const LEFT: Point[] = [
  [1200.7, 224], [1201.3, 272], [1200.7, 320], [1199.7, 368], [1199, 415.3], [1198, 463.7], [1197.3, 512.3],
  [1196.5, 560],
];
const MID: Point[] = [
  [1237.7, 235], [1241, 269.3], [1235.3, 311.7], [1238.3, 358.7], [1237, 406.7], [1236, 459.3], [1230, 518.7],
  [1235, 579],
];
const RIGHT: Point[] = [
  [1279.3, 238.7], [1278.3, 291], [1277.7, 343.3], [1277, 395.3], [1275.7, 446.7], [1275, 499], [1275, 550.7],
  [1274.5, 602],
];
const APEX: Point = [1274.5, 185.5];
const CAP_MID: Point = [1235, 207.3];
const CAP_RIGHT: Point = [1277, 215];

// Edges where the black wire shows through the highlight.
const DOTTED_EDGES: [Point, Point][] = [
  [CAP_MID, CAP_RIGHT], [CAP_MID, MID[0]], [MID[0], CAP_RIGHT], [LEFT[0], MID[0]], [MID[0], RIGHT[0]],
  [MID[0], MID[1]], [MID[1], RIGHT[0]], [MID[1], LEFT[1]], [MID[1], RIGHT[1]], [MID[1], MID[2]],
  [MID[2], RIGHT[1]], [MID[2], LEFT[2]], [MID[2], RIGHT[2]], [MID[2], MID[3]], [MID[3], RIGHT[2]],
  [MID[3], LEFT[3]], [MID[3], MID[4]], [MID[4], RIGHT[3]], [MID[4], LEFT[4]], [MID[4], MID[5]],
  [MID[5], RIGHT[4]], [MID[5], LEFT[5]], [MID[5], MID[6]], [MID[6], RIGHT[5]], [MID[6], LEFT[6]],
  [MID[6], RIGHT[6]], [MID[6], MID[7]], [MID[7], RIGHT[6]],
];

const SOLID_EDGES: [Point, Point][] = [
  [LEFT[0], CAP_MID], [CAP_MID, APEX], [APEX, CAP_RIGHT], [CAP_RIGHT, RIGHT[0]], [LEFT[0], MID[1]],
  [LEFT[1], MID[2]], [LEFT[2], MID[3]], [LEFT[3], MID[4]], [LEFT[4], MID[5]], [LEFT[5], MID[6]],
  [MID[6], LEFT[7]], [MID[3], RIGHT[3]], [MID[4], RIGHT[4]], [MID[5], RIGHT[5]], [LEFT[7], MID[7]],
  [MID[7], RIGHT[7]], [LEFT[0], LEFT[7]], [RIGHT[0], RIGHT[7]],
];

const toPoints = (points: Point[]) => points.map((p) => p.join(",")).join(" ");
const toPath = (edges: [Point, Point][]) => edges.map(([a, b]) => `M${a.join(" ")}L${b.join(" ")}`).join("");

function Viewport() {
  return (
    <div className="min-h-0 flex-1 bg-white">
      <svg viewBox="327 98 1883 1036" className="size-full" role="img" aria-label="Folded surfaces on volume 1">
        <defs>
          {SHADES.map(({ id, from, to, stops }) => (
            <linearGradient
              key={id}
              id={id}
              gradientUnits="userSpaceOnUse"
              x1={from[0]}
              y1={from[1]}
              x2={to[0]}
              y2={to[1]}
            >
              {stops.map(([offset, color], i) => (
                <stop key={i} offset={offset} stopColor={color} />
              ))}
            </linearGradient>
          ))}
        </defs>

        <g shapeRendering="crispEdges">
          {/* back left arm */}
          <g fill="url(#armBackLeft)">
            <path d="M948.9 349.3A107.5 63.8 -64.9 0 0 857.7 544.1A107.5 63.8 -64.9 0 0 948.9 349.3Z" />
            <path d="M950 350L1162 447L1200 560L1040 632L863 550Z" />
          </g>
          <path d="M952 351A107.5 63.8 -64.9 0 0 829.7 487.7" fill="none" stroke="#00ffff" strokeWidth="1.3" />
          <path d="M863 550A107.5 63.8 -64.9 0 1 829.7 487.7L1069 597" fill="none" stroke="#ff00ff" strokeWidth="1.3" />

          {/* back right arm */}
          <g fill="url(#armBackRight)">
            <path d="M1653.1 532.3A107 70.4 61.8 0 0 1551.9 343.7A107 70.4 61.8 0 0 1653.1 532.3Z" />
            <path d="M1548 343L1379 433L1370 545L1515 609L1652 538Z" />
          </g>
          <path d="M1548 345A107 70.4 61.8 0 1 1602.5 345.3L1380 462.5" fill="none" stroke="#00ffff" strokeWidth="1.3" />
          <path d="M1602.5 345.3A107 70.4 61.8 0 1 1682.3 477.3" fill="none" stroke="#0000ff" strokeWidth="1.3" />
          <path d="M1649.6 538A107 70.4 61.8 0 0 1682.3 477.3L1471 588.5" fill="none" stroke="#ff00ff" strokeWidth="1.3" />

          {/* bottom arm */}
          <path
            d="M1157 780L1153.8 1051A108.7 50 0 0 0 1371.3 1051L1375 780L1272.6 730Z"
            fill="url(#armBottom)"
          />
          <path d="M1153.8 1051A108.7 50 0 0 0 1371.3 1051" fill="none" stroke="#ff00ff" strokeWidth="1.5" />

          {/* front left arm */}
          <path
            d="M1161 548.3L894 692A109.3 71.5 62.5 0 1 936.3 695.7L1196.5 560Q1178 549 1161 548.3Z"
            fill="url(#frontLeftTeal)"
          />
          <path
            d="M936.3 695.7L1196.5 560L1274.5 602L1275.6 692.1L1015.7 827.9L960 760Z"
            fill="url(#frontLeftGray)"
          />
          <path d="M1015.7 827.9L1275.6 692.1L1272.6 737.5L994 884L980 830Z" fill="url(#frontLeftMagenta)" />
          <ellipse cx="935.3" cy="791.5" rx="109.3" ry="71.5" transform="rotate(62.5 935.3 791.5)" fill="#940094" />
          <path d="M935 791L854.5 754.6A109.3 71.5 62.5 0 1 936.3 695.7Z" fill="#009494" />
          <path d="M935 791L936.3 695.7A109.3 71.5 62.5 0 1 1015.7 827.9Z" fill="#969696" />
          <g fill="none" strokeWidth="1.3">
            <path
              d="M854.5 754.6A109.3 71.5 62.5 0 1 936.3 695.7L1196.5 560Q1178 549 1161 548.3V525"
              stroke="#00ffff"
            />
            <path d="M935 791L936.3 695.7A109.3 71.5 62.5 0 1 1015.7 827.9" stroke="#fff" />
            <path
              d="M1272.6 737.5L1275.6 692.1L1015.7 827.9L854.5 754.6A109.3 71.5 62.5 0 0 985.8 888.5A109.3 71.5 62.5 0 0 1015.7 827.9"
              stroke="#ff00ff"
            />
          </g>

          {/* front right arm */}
          <path
            d="M1378.7 545.7L1672.5 680.4A109.8 64.1 -65.1 0 0 1634.3 688.6L1350.7 557.3Q1364 548 1378.7 545.7Z"
            fill="url(#frontRightBlue)"
          />
          <path
            d="M1350.7 557.3L1634.3 688.6A109.8 64.1 -65.1 0 0 1582.8 743.9L1274.5 602Z"
            fill="url(#frontRightRed)"
          />
          <path d="M1274.5 602L1582.8 743.9L1590 800L1559.8 821.8L1275.6 692.1Z" fill="url(#frontRightGray)" />
          <path d="M1275.6 692.1L1559.8 821.8L1600 840L1581.6 879.6L1272.6 737.5Z" fill="url(#frontRightMagenta)" />
          <ellipse cx="1633.7" cy="783.2" rx="109.8" ry="64.1" transform="rotate(-65.1 1633.7 783.2)" fill="#840084" />
          <path d="M1633.7 783.2L1634.3 688.6A109.8 64.1 -65.1 0 1 1707.6 744.6Z" fill="#000088" />
          <path d="M1633.7 783.2L1634.3 688.6A109.8 64.1 -65.1 0 0 1582.8 743.9Z" fill="#551515" />
          <path d="M1633.7 783.2L1582.8 743.9A109.8 64.1 -65.1 0 0 1559.8 821.8Z" fill="#868686" />
          <g fill="none" strokeWidth="1.3">
            <path
              d="M1378.7 545.7Q1364 548 1350.7 557.3L1634.3 688.6A109.8 64.1 -65.1 0 1 1707.6 744.6"
              stroke="#0000ff"
            />
            <path
              d="M1350.7 557.3L1274.5 602L1582.8 743.9A109.8 64.1 -65.1 0 1 1634.3 688.6L1633.7 783.2"
              stroke="#a52a2a"
            />
            <path
              d="M1274.5 602L1275.6 692.1L1559.8 821.8A109.8 64.1 -65.1 0 1 1582.8 743.9L1633.7 783.2"
              stroke="#fff"
            />
            <path
              d="M1275.6 692.1L1272.6 737.5M1559.8 821.8L1707.6 744.6A109.8 64.1 -65.1 0 1 1587.5 882.8A109.8 64.1 -65.1 0 1 1559.8 821.8"
              stroke="#ff00ff"
            />
          </g>

          {/* top arm */}
          <path
            d="M1165 185L1161 548.3Q1178 549 1196.5 560L1274.5 602L1350.7 557.3Q1364 548 1378.7 545.7L1384 185Z"
            fill="url(#armTop)"
          />
          <ellipse cx="1274.5" cy="185" rx="109.5" ry="53.5" fill="#007070" />
          <path d="M1274.5 185L1347.3 146.7A109.5 53.5 0 0 1 1355 222.3Z" fill="#000070" />
          <path d="M1274.5 185L1355 222.3A109.5 53.5 0 0 1 1279.3 238.7Z" fill="#481111" />
          <g fill="none" strokeWidth="1.5">
            <path
              d="M1200.7 224A109.5 53.5 0 0 1 1165 185A109.5 53.5 0 0 1 1274.5 131.5A109.5 53.5 0 0 1 1347.3 146.7"
              stroke="#00ffff"
            />
            <path
              d="M1355 222.3A109.5 53.5 0 0 0 1384 185A109.5 53.5 0 0 0 1347.3 146.7L1274.5 185L1355 222.3L1350.7 557.3"
              stroke="#0000ff"
            />
            <path d="M1279.3 238.7A109.5 53.5 0 0 0 1355 222.3" stroke="#a52a2a" />
          </g>

          {/* meshed surfaces */}
          <polygon points={toPoints([APEX, CAP_MID, LEFT[0], MID[0], RIGHT[0], CAP_RIGHT])} fill="#007400" />
          <polygon points={toPoints([...LEFT, ...[...MID].reverse()])} fill="#00ae00" />
          <polygon points={toPoints([...MID, ...[...RIGHT].reverse()])} fill="#00c800" />
          <g fill="none">
            <path d={toPath([...SOLID_EDGES, ...DOTTED_EDGES])} stroke="#ffa500" strokeWidth="2.6" />
            <path d={toPath(DOTTED_EDGES)} stroke="#1c1400" strokeWidth=".8" strokeDasharray="2 4" />
          </g>
        </g>

        {/* pointer to the selected tree row */}
        <path d="M358 373H516" stroke="#f00" strokeWidth="2" />
        <path d="M339 373L361 366V380Z" fill="#f00" />
      </svg>
    </div>
  );
}

// ---------------------------------------------------------------- shell

const MENUS = ["File", "Edit", "View", "Display", "Tools", "Help"];

export default function App() {
  return (
    <div className="flex h-screen flex-col overflow-hidden bg-[#1c1c1c] pl-[3px] font-['Open_Sans',sans-serif] text-[15px] leading-5 text-black">
      <SharedGradients />

      <header className="grid h-[39px] shrink-0 grid-cols-[1fr_auto_1fr] items-center border-t-2 border-[#1c1c1c] bg-[#2c2c2c]">
        <span />
        <h1 className="font-['Noto_Sans',sans-serif] text-[14px] font-bold text-white">Coreform Cubit 2021.5</h1>
        <div className="flex items-center justify-end gap-5 pr-2 text-white">
          <button type="button" aria-label="Minimize" className="mr-1">
            <svg viewBox="0 0 10 10" className="size-2.5" stroke="currentColor">
              <path d="M1 8.5H9" />
            </svg>
          </button>
          <button type="button" aria-label="Restore">
            <svg viewBox="0 0 10 10" className="size-2.5" fill="none" stroke="currentColor">
              <path d="M1.5 3.5H6.5V8.5H1.5Z" />
              <path d="M3 1.5H8.5V7" opacity=".6" />
            </svg>
          </button>
          <button
            type="button"
            aria-label="Close"
            className="flex size-[18px] items-center justify-center rounded-full bg-[#e04e1b]"
          >
            <svg viewBox="0 0 10 10" className="size-2.5" stroke="currentColor" strokeWidth="1.3">
              <path d="M1.5 1.5L8.5 8.5M8.5 1.5L1.5 8.5" />
            </svg>
          </button>
        </div>
      </header>

      <nav className="flex h-[22px] shrink-0 items-center gap-[15px] border-b border-[#d2d2d2] bg-[#efefef] pl-2.5">
        {MENUS.map((menu) => (
          <button key={menu} type="button">
            <span className="underline underline-offset-2">{menu[0]}</span>
            {menu.slice(1)}
          </button>
        ))}
      </nav>

      <Toolbar />

      <main className="flex min-h-0 flex-1 bg-[#efefef]">
        <aside className="flex w-[324px] shrink-0 flex-col">
          <ModelTree />
          <PropertiesPage />
        </aside>
        <div className="flex min-w-0 flex-1 flex-col">
          <Viewport />
          <CommandLine />
        </div>
        <CommandPanel />
      </main>

      <footer className="flex h-[21px] shrink-0 bg-[#efefef]">
        <p className="w-[57.5%] pt-0.5 pl-0.5 leading-[19px]">Working Directory: /home/mitch/trelis/build/claro/bin</p>
        <input
          type="text"
          aria-label="Command input"
          className="min-w-0 flex-1 rounded-t-xs border border-b-0 border-[#a8a8a8] bg-white px-1 outline-none"
        />
        <button
          type="button"
          aria-label="Stop"
          className="flex w-6 items-center justify-center rounded-t-[3px] border border-b-0 border-[#a8a8a8] bg-[#f7f7f7]"
        >
          <svg viewBox="0 0 18 18" className="size-[18px]">
            <circle cx="9" cy="9" r="8" fill="#e8102a" stroke="#5a0008" />
            <path d="M6 6L12 12M12 6L6 12" stroke="#fff" strokeWidth="2" />
          </svg>
        </button>
      </footer>
    </div>
  );
}
